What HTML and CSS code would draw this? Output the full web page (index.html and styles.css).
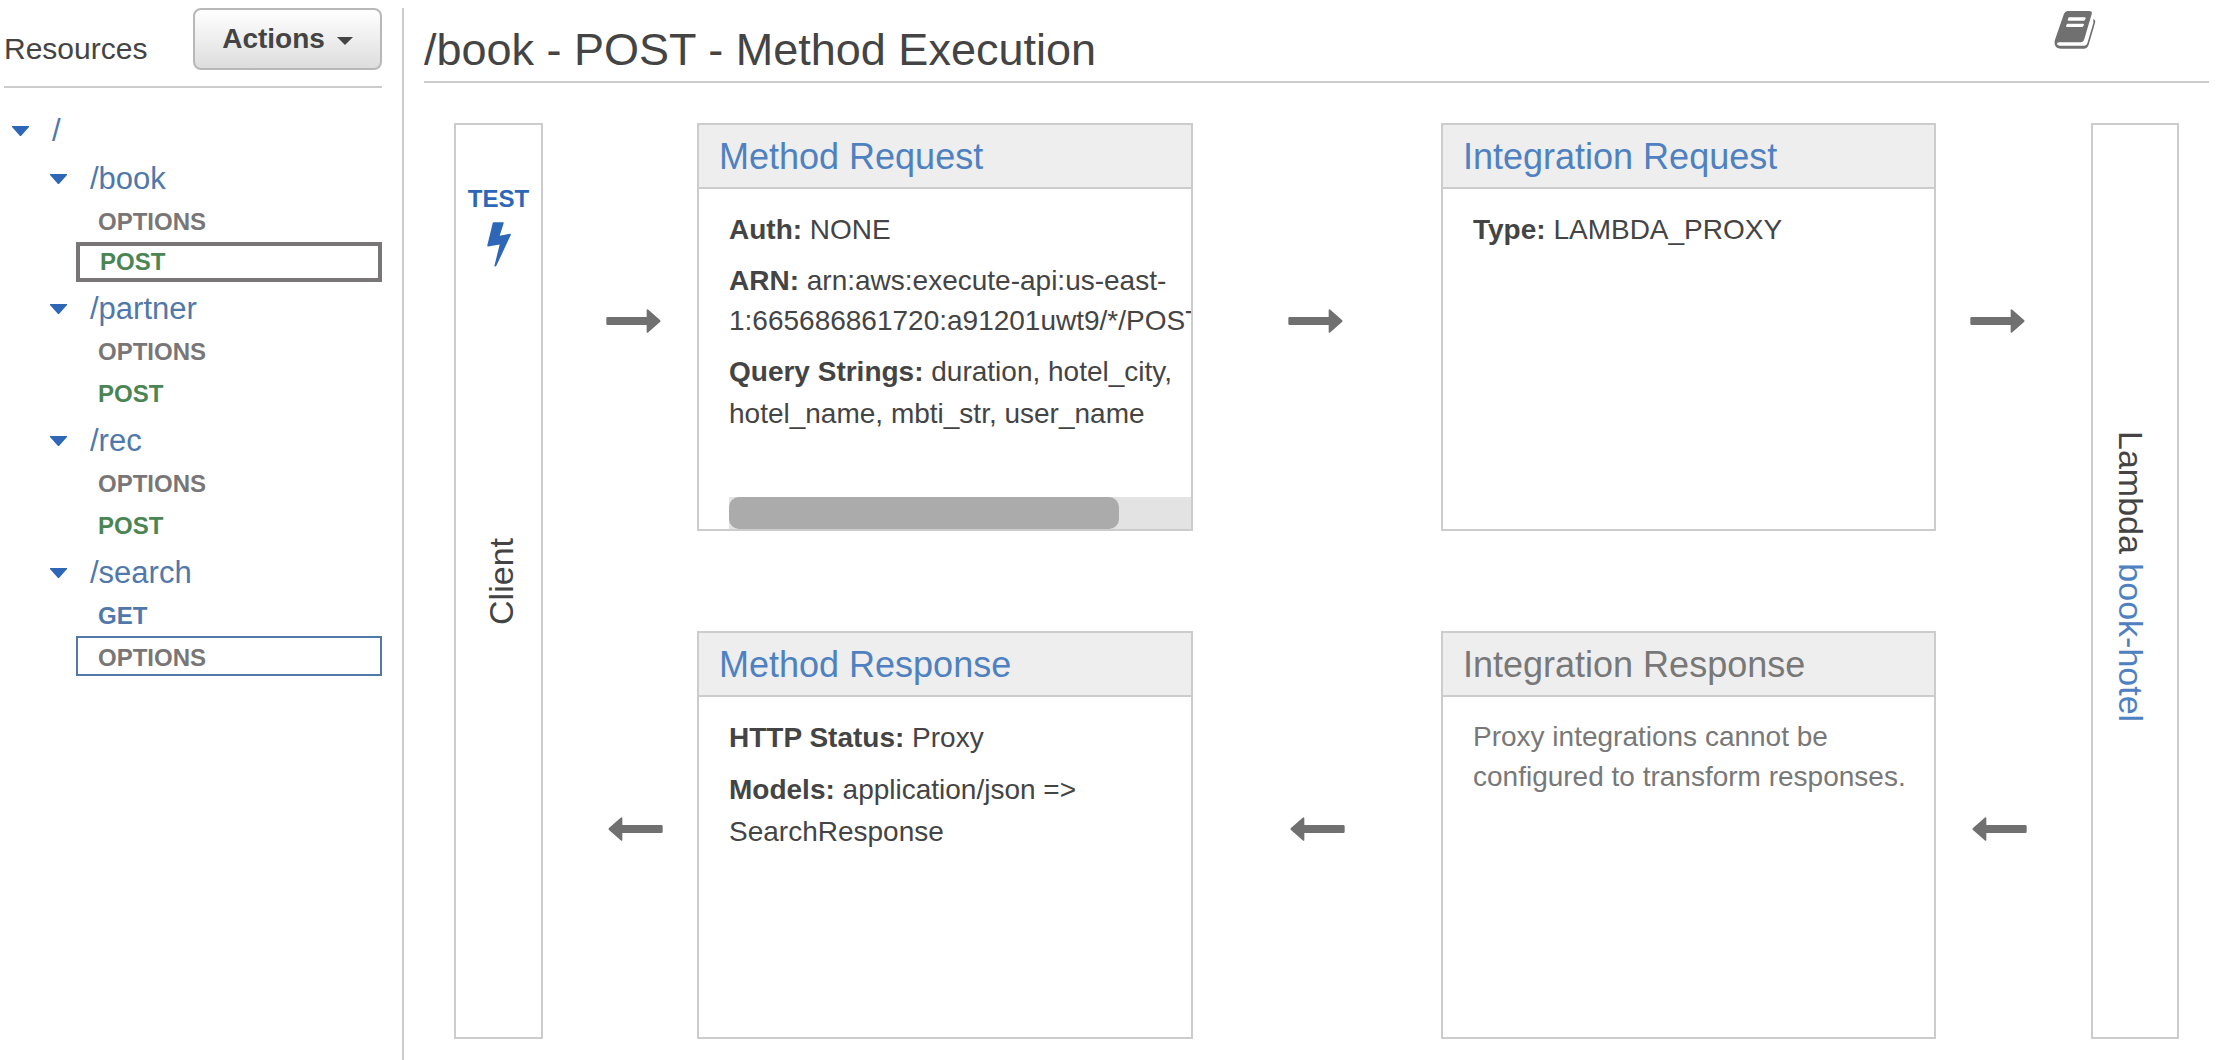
FILE: index.html
```html
<!DOCTYPE html>
<html lang="en">
<head>
<meta charset="utf-8">
<title>Method Execution</title>
<meta name="viewport" content="width=device-width, initial-scale=1">
<link rel="stylesheet" href="styles.css">
</head>
<body>
<svg class="defs" aria-hidden="true">
  <symbol id="arrow-right" viewBox="0 0 163 72"><path d="M4 24H121V4Q121-2 126 2L161 33Q164 36 161 39L126 70Q121 74 121 68V48H4Q0 48 0 44V28Q0 24 4 24Z"/></symbol>
  <symbol id="arrow-left" viewBox="0 0 163 72"><path d="M159 24H42V4Q42-2 37 2L2 33Q-1 36 2 39L37 70Q42 74 42 68V48H159Q163 48 163 44V28Q163 24 159 24Z"/></symbol>
  <symbol id="caret" viewBox="0 0 17 10"><path d="M0 0H17V1L9 10H8L0 1Z"/></symbol>
</svg>
<div class="app">
  <aside class="sidebar">
    <header class="sidebar-head">
      <h2 class="sidebar-title">Resources</h2>
      <button class="actions" type="button">Actions<svg class="actions-caret" viewBox="0 0 16 8" aria-hidden="true"><path d="M0 0H16L8 8Z"/></svg></button>
    </header>
    <nav aria-label="Resources">
      <ul class="tree">
        <li>
          <div class="node"><button class="toggle" type="button" aria-label="Collapse /"><svg class="caret"><use href="#caret"/></svg></button><a href="#root">/</a></div>
          <ul class="tree children">
            <li>
              <div class="node"><button class="toggle" type="button" aria-label="Collapse /book"><svg class="caret"><use href="#caret"/></svg></button><a href="#book">/book</a></div>
              <ul class="tree methods">
                <li><a class="method" href="#book-options">OPTIONS</a></li>
                <li><a class="method post selected" href="#book-post" aria-current="page">POST</a></li>
              </ul>
            </li>
            <li>
              <div class="node"><button class="toggle" type="button" aria-label="Collapse /partner"><svg class="caret"><use href="#caret"/></svg></button><a href="#partner">/partner</a></div>
              <ul class="tree methods">
                <li><a class="method" href="#partner-options">OPTIONS</a></li>
                <li><a class="method post" href="#partner-post">POST</a></li>
              </ul>
            </li>
            <li>
              <div class="node"><button class="toggle" type="button" aria-label="Collapse /rec"><svg class="caret"><use href="#caret"/></svg></button><a href="#rec">/rec</a></div>
              <ul class="tree methods">
                <li><a class="method" href="#rec-options">OPTIONS</a></li>
                <li><a class="method post" href="#rec-post">POST</a></li>
              </ul>
            </li>
            <li>
              <div class="node"><button class="toggle" type="button" aria-label="Collapse /search"><svg class="caret"><use href="#caret"/></svg></button><a href="#search">/search</a></div>
              <ul class="tree methods">
                <li><a class="method get" href="#search-get">GET</a></li>
                <li><a class="method highlighted" href="#search-options">OPTIONS</a></li>
              </ul>
            </li>
          </ul>
        </li>
      </ul>
    </nav>
  </aside>

  <main class="main">
    <header class="main-head">
      <h1 class="main-title">/book - POST - Method Execution</h1>
      <a class="docs" href="#docs" aria-label="Documentation">
        <svg class="docs-icon" viewBox="0 0 124 114"><path fill-rule="evenodd" d="M40 0H104Q115 0 112 10L90 84Q87 94 78 94H14Q7 94 8 99Q9 104 17 104H90Q97 104 99 97L117 36V24Q125 27 122 36L103 101Q99 113 88 113H19Q4 113 1 99Q0 88 4 80L29 8Q32 0 40 0ZM44 19Q42 19 42 22L40 26Q40 29 43 29H88Q91 29 92 26L94 22Q94 19 91 19ZM40 38Q37 38 37 41L35 45Q35 48 38 48H83Q86 48 87 45L89 41Q89 38 86 38Z"/></svg>
      </a>
    </header>

    <div class="flow">
      <section class="endpoint client">
        <a class="test" href="#test">TEST
          <svg class="bolt" viewBox="0 0 72 134" aria-hidden="true"><path d="M20 0H48Q51 0 50 3L38 41L69 35Q73 35 71 39L28 131Q25 135 22 132L38 67L3 73Q0 73 1 69L17 3Q17 0 20 0Z"/></svg>
        </a>
        <span class="vertical upward">Client</span>
      </section>

      <div class="step first"><svg class="arrow"><use href="#arrow-right"/></svg></div>

      <section class="card">
        <h2 class="card-title"><a href="#method-request">Method Request</a></h2>
        <div class="card-body">
          <p><b>Auth:</b> NONE</p>
          <p class="tight"><b>ARN:</b> arn:aws:execute-api:us-east-<br><span class="nowrap">1:665686861720:a91201uwt9/*/POST</span></p>
          <p><b>Query Strings:</b> duration, hotel_city, hotel_name, mbti_str, user_name</p>
          <div class="scroll-track"><div class="scroll-thumb"></div></div>
        </div>
      </section>

      <div class="step middle"><svg class="arrow"><use href="#arrow-right"/></svg></div>

      <section class="card">
        <h2 class="card-title"><a href="#integration-request">Integration Request</a></h2>
        <div class="card-body"><p><b>Type:</b> LAMBDA_PROXY</p></div>
      </section>

      <div class="step last"><svg class="arrow"><use href="#arrow-right"/></svg></div>

      <section class="endpoint backend">
        <span class="vertical">Lambda <a href="#book-hotel">book-hotel</a></span>
      </section>

      <div class="step first back"><svg class="arrow"><use href="#arrow-left"/></svg></div>

      <section class="card">
        <h2 class="card-title"><a href="#method-response">Method Response</a></h2>
        <div class="card-body">
          <p><b>HTTP Status:</b> Proxy</p>
          <p><b>Models:</b> application/json =&gt; SearchResponse</p>
        </div>
      </section>

      <div class="step middle back"><svg class="arrow"><use href="#arrow-left"/></svg></div>

      <section class="card disabled">
        <h2 class="card-title">Integration Response</h2>
        <div class="card-body"><p class="tight">Proxy integrations cannot be configured to transform responses.</p></div>
      </section>

      <div class="step last back"><svg class="arrow"><use href="#arrow-left"/></svg></div>
    </div>
  </main>
</div>
</body>
</html>
```
FILE: styles.css
```css
* {
  box-sizing: border-box;
}

body {
  margin: 0;
  background: #fff;
  color: #444;
  font-family: "Liberation Sans", Arial, sans-serif;
  font-size: 28px;
}

h1,
h2,
p {
  margin: 0;
  font-weight: 400;
}

a {
  color: inherit;
  text-decoration: none;
}

button {
  font: inherit;
  color: inherit;
  cursor: pointer;
}

svg {
  display: block;
  fill: currentColor;
}

.defs {
  display: none;
}

.app {
  display: flex;
  min-height: 100vh;
  padding-top: 8px;
}

/* Resource tree */
.sidebar {
  flex: 0 0 404px;
  padding: 0 20px 0 4px;
  border-right: 2px solid #ccc;
}

.sidebar-head {
  display: flex;
  justify-content: space-between;
  align-items: flex-start;
  height: 80px;
  border-bottom: 2px solid #ccc;
}

.sidebar-title {
  padding-top: 22px;
  font-size: 30px;
  line-height: 38px;
}

.actions {
  display: flex;
  align-items: center;
  justify-content: center;
  gap: 12px;
  width: 189px;
  height: 62px;
  padding: 0;
  border: 2px solid #b8b8b8;
  border-radius: 8px;
  background: linear-gradient(#fff, #ddd);
  font-weight: 700;
}

.actions-caret {
  width: 16px;
  height: 8px;
  margin-top: 4px;
}

.tree {
  margin: 0;
  padding: 0;
  list-style: none;
}

nav > .tree {
  padding: 14px 0 0 8px;
}

.children {
  padding-left: 38px;
}

.methods {
  padding-left: 26px;
}

.node {
  display: flex;
  align-items: center;
  gap: 23px;
  padding-top: 10px;
  color: #5078ab;
  font-size: 31px;
  line-height: 38px;
}

.toggle {
  padding: 0;
  border: 0;
  background: none;
  color: #2e66b8;
}

.caret {
  width: 17px;
  height: 10px;
}

.method {
  display: block;
  margin-top: 2px;
  padding: 4px 0 0 20px;
  border: 2px solid transparent;
  color: #787676;
  font-size: 24px;
  font-weight: 700;
  line-height: 32px;
}

.method.post {
  color: #4a8553;
}

.method.get {
  color: #5078ab;
}

.method.selected {
  margin-bottom: -2px;
  padding-top: 0;
  border: 4px solid #787676;
}

.method.highlighted {
  border-color: #5078ab;
}

/* Method execution */
.main {
  flex: 1;
  min-width: 0;
  padding: 0 13px 20px 20px;
}

.main-head {
  display: flex;
  justify-content: space-between;
  height: 75px;
  border-bottom: 2px solid #ccc;
}

.main-title {
  padding-top: 16px;
  font-size: 45px;
  line-height: 52px;
}

.docs {
  padding: 3px 113px 0 0;
  color: #707070;
}

.docs-icon {
  width: 42px;
  height: 38px;
}

.flow {
  display: grid;
  grid-template-columns:
    minmax(0, 89fr) minmax(0, 154fr) minmax(0, 496fr) minmax(0, 248fr)
    minmax(0, 495fr) minmax(0, 155fr) minmax(0, 88fr);
  row-gap: 100px;
  padding: 40px 30px 0;
}

.endpoint {
  display: grid;
  grid-row: 1 / 3;
  justify-items: center;
  border: 2px solid #ccc;
  font-size: 34px;
}

.client {
  grid-column: 1;
  grid-template-rows: 1fr auto 1fr;
}

.backend {
  grid-column: 7;
  align-items: center;
  padding: 0 8px 8px 0;
}

.test {
  padding-top: 58px;
  color: #2e66b8;
  font-size: 24px;
  font-weight: 700;
  line-height: 32px;
}

.bolt {
  width: 24px;
  height: 45px;
  margin: 7px auto 0;
}

.vertical {
  writing-mode: vertical-rl;
  line-height: 40px;
  white-space: nowrap;
}

.upward {
  margin-left: 4px;
  transform: rotate(180deg);
}

.vertical a,
.card-title {
  color: #4f81c1;
}

.step {
  display: flex;
  align-items: center;
  justify-content: center;
  padding-bottom: 12px;
  color: #707070;
}

.step.first {
  padding-left: 26px;
}

.step.middle {
  padding-right: 4px;
}

.step.last {
  padding-right: 32px;
}

.arrow {
  width: 55px;
  height: 24px;
}

.back .arrow {
  margin-left: 4px;
}

.card {
  display: flex;
  flex-direction: column;
  min-height: 408px;
  border: 2px solid #ccc;
}

.card-title {
  padding: 2px 0 0 20px;
  border-bottom: 2px solid #ccc;
  background: #eee;
  font-size: 36px;
  line-height: 60px;
}

.card-body {
  display: flex;
  flex: 1;
  flex-direction: column;
  gap: 10px;
  padding: 20px 0 0 30px;
  overflow: hidden;
  line-height: 42px;
}

.tight {
  line-height: 40px;
}

.nowrap {
  white-space: nowrap;
}

.disabled,
.disabled .card-title {
  color: #787878;
}

.scroll-track {
  height: 32px;
  margin-top: auto;
  background: #e3e3e3;
}

.scroll-thumb {
  width: 84.4%;
  height: 100%;
  border-radius: 10px;
  background: #ababab;
}
```
